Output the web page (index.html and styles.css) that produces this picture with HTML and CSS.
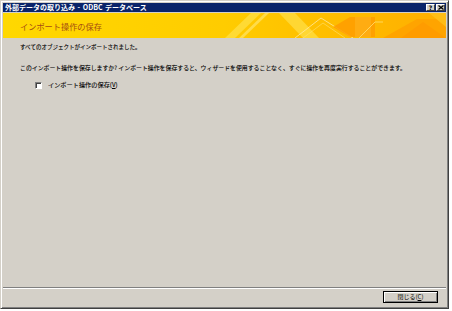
FILE: index.html
```html
<!DOCTYPE html>
<html lang="ja">
<head>
  <meta charset="UTF-8" />
  <title>外部データの取り込み - ODBC データベース</title>
  <link rel="stylesheet" href="styles.css">
</head>
<body>
  <div class="window">
    <div class="titlebar">
      <span class="title">外部データの取り込み - ODBC データベース</span>
      <div class="caption-buttons">
        <span class="cap-btn">?</span>
        <span class="cap-btn">
          <svg width="6" height="5" viewBox="0 0 6 5"><path d="M0.5 0.5 L5.5 4.5 M5.5 0.5 L0.5 4.5" stroke="#000" stroke-width="1.3"/></svg>
        </span>
      </div>
    </div>

    <div class="banner">
      <svg class="banner-art" width="443" height="25" viewBox="0 0 443 25" preserveAspectRatio="none">
        <defs>
          <linearGradient id="bg" x1="0" x2="1" y1="0" y2="0">
            <stop offset="0" stop-color="#ffd800"/>
            <stop offset="0.5" stop-color="#ffcc00"/>
            <stop offset="1" stop-color="#ffae00"/>
          </linearGradient>
        </defs>
        <rect width="443" height="25" fill="url(#bg)"/>
        <!-- stripes on the left of the art -->
        <polygon points="222,25 232,25 258,0 248,0" fill="#ffe14a" opacity="0.7"/>
        <polygon points="236,25 240,25 266,0 262,0" fill="#ffe97a" opacity="0.6"/>
        <polygon points="276,0 292,0 316,25 300,25" fill="#ffdc40" opacity="0.8"/>
        <!-- thin peak lines -->
        <polyline points="292,25 318,5 350,25" fill="none" stroke="#ffeaa0" stroke-width="0.8"/>
        <polyline points="300,25 320,10 342,25" fill="none" stroke="#ffe070" stroke-width="0.6"/>
        <!-- arrow -->
        <polygon points="330,14 347,4 372,4 372,24 347,24" fill="#ff9c00" opacity="0.85"/>
        <polygon points="352,4 368,4 368,24 352,24" fill="#ffb01a" opacity="0.7"/>
        <polyline points="356,25 372,9 380,9" fill="none" stroke="#ffe070" stroke-width="0.8"/>
        <!-- right side -->
        <polygon points="380,25 414,6 443,6 443,25" fill="#ffa400"/>
        <polygon points="398,25 420,9 443,25" fill="#ff9c00"/>
        <polygon points="426,0 443,0 443,14" fill="#ffc21a" opacity="0.8"/>
      </svg>
      <h1 class="banner-title">インポート操作の保存</h1>
    </div>

    <div class="content">
      <p class="msg msg-done">すべてのオブジェクトがインポートされました。</p>
      <p class="msg msg-ask">このインポート操作を保存しますか? インポート操作を保存すると、ウィザードを使用することなく、すぐに操作を再度実行することができます。</p>
      <label class="save-check">
        <span class="checkbox"></span>
        <span>インポート操作の保存(<u>V</u>)</span>
      </label>
    </div>

    <div class="footer">
      <button class="btn" type="button">閉じる(<u>C</u>)</button>
    </div>
  </div>
</body>
</html>
```

FILE: styles.css
```css
body {
  margin: 0;
  background: #ffffff;
  font-family: "Noto Sans CJK JP", "DejaVu Sans", sans-serif;
}

.window {
  box-sizing: border-box;
  width: 449px;
  height: 309px;
  padding: 2px;
  background: #d4d0c8;
  border: 1px solid;
  border-color: #d4d0c8 #404040 #404040 #d4d0c8;
  box-shadow: inset 1px 1px #ffffff, inset -1px -1px #808080;
  display: flex;
  flex-direction: column;
}

.titlebar {
  height: 9px;
  background: #0a246a;
  display: flex;
  align-items: center;
  justify-content: space-between;
  padding-left: 2px;
}

.title {
  color: #ffffff;
  font-size: 7px;
  font-weight: bold;
  line-height: 9px;
  white-space: pre;
  word-spacing: 1px;
}

.caption-buttons {
  display: flex;
  gap: 1px;
  padding-right: 1px;
}

.cap-btn {
  box-sizing: border-box;
  width: 9px;
  height: 7px;
  background: #d4d0c8;
  border: 1px solid;
  border-color: #ffffff #404040 #404040 #ffffff;
  display: flex;
  align-items: center;
  justify-content: center;
  font-family: "DejaVu Sans", sans-serif;
  font-size: 6px;
  font-weight: bold;
  line-height: 5px;
  color: #000;
}

.banner {
  position: relative;
  height: 25px;
  margin-top: 1px;
  display: flex;
  align-items: center;
  overflow: hidden;
}

.banner-art {
  position: absolute;
  left: 0;
  top: 0;
}

.banner-title {
  position: relative;
  margin: 0 0 0 17px;
  font-size: 8.2px;
  font-weight: normal;
  color: #a64d12;
  line-height: 10px;
}

.content {
  flex: 1;
  padding: 5px 0 0 17px;
}

.msg {
  margin: 0;
  font-size: 5.5px;
  line-height: 8px;
  color: #000;
  white-space: nowrap;
  -webkit-text-stroke: 0.1px #000;
}

.msg-ask {
  margin-top: 13px;
  font-size: 5.9px;
}

.save-check {
  display: flex;
  align-items: center;
  gap: 6px;
  margin: 9px 0 0 15px;
  font-size: 6.2px;
  line-height: 8px;
  -webkit-text-stroke: 0.1px #000;
}

.checkbox {
  box-sizing: border-box;
  width: 7px;
  height: 7px;
  background: #ffffff;
  border: 1px solid;
  border-color: #808080 #ffffff #ffffff #808080;
  box-shadow: inset 1px 1px #404040;
}

.footer {
  border-top: 1px solid #808080;
  box-shadow: inset 0 1px #ffffff;
  padding: 3px 8px 3px 0;
  display: flex;
  justify-content: flex-end;
}

.btn {
  box-sizing: border-box;
  width: 55px;
  height: 12px;
  padding: 0;
  background: #d4d0c8;
  border: 1px solid #000000;
  box-shadow: inset 1px 1px #ffffff, inset -1px -1px #808080;
  font-family: "Noto Sans CJK JP", sans-serif;
  font-size: 6px;
  line-height: 8px;
  color: #000;
}
```
